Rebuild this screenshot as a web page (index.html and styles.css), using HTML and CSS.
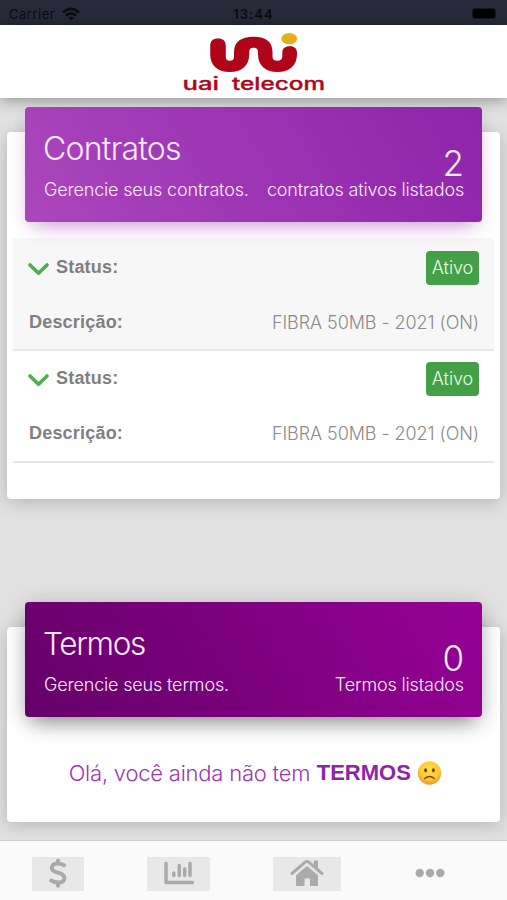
FILE: index.html
```html
<!DOCTYPE html>
<html lang="pt-BR">
<head>
<meta charset="utf-8">
<title>Uai Telecom</title>
<link rel="stylesheet" href="styles.css">
</head>
<body>
<div class="status-bar">
  <div class="carrier"><span>Carrier</span>
    <svg width="18" height="14" viewBox="0 0 18 14" fill="none" stroke="#0b0b10" stroke-width="2.6"><path d="M1 5.4Q9-1.700 17 5.400M3.900 8.600Q9 4.200 14.100 8.600"/><path d="M6.200 10.500Q9 8.300 11.800 10.500L9 13.400Z" fill="#0b0b10" stroke="none"/></svg>
  </div>
  <time>13:44</time>
  <div class="battery-wrap"><div class="battery"></div></div>
</div>
<header class="top">
  <svg class="logo" width="146" height="62" viewBox="181 32 146 62">
    <path fill="#b00519" d="M210.200 46C210.200 41 213 38.600 218 38.600S225.800 41 225.800 46V56.500C225.800 59.500 227 60.800 229.900 60.800S234 59.500 234 56.500V52C234 42 241 36.800 253.500 36.800S272.500 42 272.500 52V56.500C272.500 59.500 274 60.800 277.200 60.800S282.300 59.500 282.300 56.500V53C282.300 48.500 285 46.300 289.700 46.300S297 48.500 297 53V54C297 66 289 72 277.500 72S258 66 258 54.500V52C258 49.200 256.500 47.700 253.500 47.700S249.200 49.200 249.200 52V54.500C249.200 66 241.500 72 229.800 72S210.200 66 210.200 54.500Z"/>
    <ellipse cx="289.200" cy="38.700" rx="7.900" ry="5.600" fill="#e6ae1c"/>
    <g class="wordmark"><text x="182.500" y="90" textLength="36.500" lengthAdjust="spacingAndGlyphs">uai</text><text x="232" y="90" textLength="93" lengthAdjust="spacingAndGlyphs">telecom</text></g>
  </svg>
</header>
<main>
  <section class="card contracts">
    <div class="card-head">
      <div><h2 class="h-contratos">Contratos</h2><p>Gerencie seus contratos.</p></div>
      <div class="count"><strong>2</strong><p>contratos ativos listados</p></div>
    </div>
    <div class="list">
      <article class="item">
        <div class="row"><div class="label"><svg class="chevron" width="21" height="13" viewBox="0 0 21 13"><path d="M2 2L10.500 10.200L19 2"/></svg><b>Status:</b></div><span class="badge">Ativo</span></div>
        <div class="row"><b>Descrição:</b><span class="plan">FIBRA 50MB - 2021 (ON)</span></div>
      </article>
      <article class="item">
        <div class="row"><div class="label"><svg class="chevron" width="21" height="13" viewBox="0 0 21 13"><path d="M2 2L10.500 10.200L19 2"/></svg><b>Status:</b></div><span class="badge">Ativo</span></div>
        <div class="row"><b>Descrição:</b><span class="plan">FIBRA 50MB - 2021 (ON)</span></div>
      </article>
    </div>
  </section>
  <section class="card terms">
    <div class="card-head">
      <div><h2 class="h-termos">Termos</h2><p>Gerencie seus termos.</p></div>
      <div class="count"><strong>0</strong><p>Termos listados</p></div>
    </div>
    <div class="empty"><span class="msg">Olá, você ainda não tem</span><b>TERMOS</b>
      <svg width="25" height="24" viewBox="0 0 25 24"><defs><radialGradient id="face" cx=".5" cy=".35" r=".65"><stop offset="0" stop-color="#ffe04a"/><stop offset=".65" stop-color="#fdc72f"/><stop offset="1" stop-color="#ee951c"/></radialGradient></defs><circle cx="12.500" cy="12" r="11.700" fill="url(#face)"/><ellipse cx="8.600" cy="9.300" rx="1.500" ry="2.100" fill="#70451a"/><ellipse cx="16.400" cy="9.300" rx="1.500" ry="2.100" fill="#70451a"/><path d="M7.800 17.500Q12.500 13.500 17.200 17.500" fill="none" stroke="#70451a" stroke-width="1.400" stroke-linecap="round"/></svg>
    </div>
  </section>
</main>
<nav class="tabs">
  <div class="tab t-money"><svg width="18" height="30" viewBox="0 0 18 30" fill="none" stroke="#aaa" stroke-width="4"><path d="M15 7.200C12.500 5.800 10.500 5.500 8.600 5.500C5 5.500 2.800 7.200 2.800 9.900C2.800 16 15.300 13.300 15.300 19.900C15.300 23 12.700 24.500 9.200 24.500C6.500 24.500 4.200 23.800 2.300 22.500" stroke-linecap="round"/><path d="M9 2.500V5M9 25V27.800" stroke-linecap="round"/></svg></div>
  <div class="tab t-chart"><svg width="30" height="24" viewBox="0 0 30 24" fill="none" stroke="#aaa" stroke-linecap="round" stroke-linejoin="round"><path d="M2 2.500V21.500H28.500" stroke-width="3.500"/><path d="M9.800 12V14.500M15.300 4.500V14.500M20.700 8V14.500M26 2.500V14.500" stroke-width="3.500"/></svg></div>
  <div class="tab t-home"><svg width="34" height="28" viewBox="0 0 34 28"><path d="M2 14.500L15.200 3.200Q17 1.700 18.800 3.200L32 14.500" fill="none" stroke="#aaa" stroke-width="3" stroke-linecap="round"/><path d="M23.800 1.500H28V11L23.800 7Z" fill="#aaa"/><path d="M6 16.200L17 7L28 16.200V25.800Q28 27 26.800 27H20V19.500H14.500V27H7.200Q6 27 6 25.800Z" fill="#aaa"/></svg></div>
  <div class="tab t-more"><svg width="30" height="10" viewBox="0 0 30 10" fill="#aaa"><circle cx="4.700" cy="5" r="4.200"/><circle cx="15" cy="5" r="4.200"/><circle cx="25.300" cy="5" r="4.200"/></svg></div>
</nav>
</body>
</html>
```
FILE: styles.css
```css
* { box-sizing: border-box; }
html, body { margin: 0; height: 100%; }
body {
  display: flex;
  flex-direction: column;
  height: 900px;
  overflow: hidden;
  background: #e1e1e1;
  font-family: Inter, "Liberation Sans", sans-serif;
  font-weight: 300;
}
h2, p { margin: 0; font-weight: 300; white-space: nowrap; }
.status-bar {
  flex: none;
  height: 25px;
  display: grid;
  grid-template-columns: 1fr auto 1fr;
  align-items: center;
  padding: 2px 11px 0 9px;
  background: #282a39;
  color: #0b0b10;
  font-size: 13px;
  font-weight: 400;
}
.carrier { display: flex; align-items: center; gap: 7px; letter-spacing: .5px; }
.status-bar time { font-weight: 600; letter-spacing: 1.1px; margin-left: 2px; }
.battery-wrap { display: flex; justify-content: flex-end; }
.battery { width: 24px; height: 11px; border-radius: 3px; background: #000; border: 1px solid #171821; }
.top {
  flex: none;
  height: 73px;
  display: flex;
  justify-content: center;
  padding-top: 7px;
  background: #fff;
  box-shadow: 0 2px 14px rgba(0, 0, 0, .36);
}
.wordmark { font: 500 17px Inter, sans-serif; fill: #b00519; stroke: #b00519; stroke-width: .3; }
main { flex: 1; min-height: 0; padding: 34px 7px 0; }
.card {
  background: #fff;
  border-radius: 4px;
  box-shadow: 0 3px 18px rgba(0, 0, 0, .2);
  padding: 0 6px;
}
.contracts { height: 367px; }
.terms { height: 195px; margin-top: 128px; }
.card-head {
  position: relative;
  top: -25px;
  height: 115px;
  margin: 0 12px;
  padding: 0 18px 0 19px;
  display: flex;
  justify-content: space-between;
  border-radius: 4px;
  color: #fbe9ff;
}
.contracts .card-head {
  background: linear-gradient(60deg, #ab47bc, #9c34b3 50%, #8e24aa);
  box-shadow: 0 12px 20px -10px rgba(156, 39, 176, .45), 0 3px 14px rgba(120, 60, 130, .12);
}
.terms .card-head {
  background: linear-gradient(60deg, #650068, #7d007f 50%, #960096);
  box-shadow: 0 12px 20px -8px rgba(0, 0, 0, .36), 0 4px 22px rgba(0, 0, 0, .2);
}
.card-head h2 { margin-top: 22px; margin-left: -1px; font-size: 32px; line-height: 39px; }
.h-contratos { letter-spacing: -.75px; }
.card-head .h-termos { font-size: 31.5px; letter-spacing: -1.3px; }
.card-head p { font-size: 18px; line-height: 24px; letter-spacing: -.17px; }
.card-head h2 + p { margin-top: 10px; }
.count { text-align: right; padding-top: 38px; }
.count strong { display: block; font-size: 35px; font-weight: 300; line-height: 37px; height: 33px; }
.list { margin-top: -9px; }
.item { height: 113px; border-bottom: 2px solid #e6e6e6; padding: 2px 15px 0 16px; }
.item + .item { height: 112px; padding-top: 0; }
.item:first-child { background: #f7f7f7; }
.row { display: flex; justify-content: space-between; align-items: center; height: 55px; font-size: 18px; color: #8b8b8b; }
.row b { font-family: "Liberation Sans", sans-serif; font-weight: 700; letter-spacing: .2px; color: #808080; }
.plan { letter-spacing: -.08px; }
.label { display: flex; align-items: center; gap: 7px; margin-left: -1px; }
.chevron { margin-top: 3px; fill: none; stroke: #4caf50; stroke-width: 3.6; stroke-linecap: round; stroke-linejoin: round; }
.badge {
  width: 53px;
  height: 34px;
  display: grid;
  place-items: center;
  border-radius: 4px;
  background: #43a047;
  color: #e9fbe8;
  letter-spacing: -.1px;
}
.empty { display: flex; align-items: center; justify-content: center; gap: 6.5px; height: 30px; margin-top: 16px; padding-left: 4px; color: #9c35b3; font-size: 22px; white-space: nowrap; }
.msg { letter-spacing: -.22px; }
.empty b { font-family: "Liberation Sans", sans-serif; font-weight: 700; color: #8e24aa; }
.tabs {
  position: relative;
  flex: none;
  height: 60px;
  display: flex;
  padding: 16px 0 0 32px;
  background: #fafafa;
  border-top: 1.5px solid #cfcfcf;
}
.tab { height: 34px; display: grid; place-items: center; padding-bottom: 2px; background: #e8e8e8; border-radius: 1px; }
.t-money { width: 52px; }
.t-chart { width: 63px; margin-left: 63px; }
.t-home { width: 68px; margin-left: 63px; }
.t-more { width: 50px; margin-left: 64px; background: none; }
```
